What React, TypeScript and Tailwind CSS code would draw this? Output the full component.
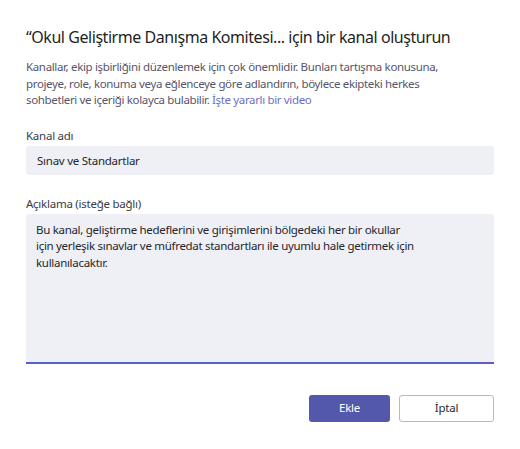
export default function App() {
  return (
    <div
      className="w-[520px] h-[449px] bg-white px-[26px] pt-[25px] text-[#242424]"
      style={{ fontFamily: '"Noto Sans", "Open Sans", sans-serif' }}
    >
      <h1 className="whitespace-nowrap text-[16px] leading-[24px] tracking-[-0.45px] font-normal text-[#1f1f24]">
        “Okul Geliştirme Danışma Komitesi... için bir kanal oluşturun
      </h1>
      <p className="mt-[10px] whitespace-nowrap text-[11.5px] leading-[16.5px] tracking-[-0.35px] text-[#56566a]">
        Kanallar, ekip işbirliğini düzenlemek için çok önemlidir. Bunları tartışma konusuna,
        <br />
        projeye, role, konuma veya eğlenceye göre adlandırın, böylece ekipteki herkes
        <br />
        sohbetleri ve içeriği kolayca bulabilir.{" "}
        <a className="text-[#6b6fc4]">İşte yararlı bir video</a>
      </p>

      <div className="mt-[19px] text-[11.5px] leading-[16.5px] tracking-[-0.25px] text-[#3b3b44]">
        Kanal adı
      </div>
      <div className="mt-[2px] h-[29px] rounded-[3px] bg-[#eef0f5] px-[11px] flex items-center text-[11.5px] tracking-[-0.25px] text-[#26262c]">
        Sınav ve Standartlar
      </div>

      <div className="mt-[21px] text-[11.5px] leading-[16.5px] tracking-[-0.25px] text-[#3b3b44]">
        Açıklama (isteğe bağlı)
      </div>
      <div className="mt-[1px] h-[150px] rounded-t-[3px] bg-[#eef0f5] border-b-2 border-[#5b5fc7] px-[10px] pt-[8px] whitespace-nowrap text-[11.5px] leading-[16.5px] tracking-[-0.3px] text-[#26262c]">
        Bu kanal, geliştirme hedeflerini ve girişimlerini bölgedeki her bir okullar
        <br />
        için yerleşik sınavlar ve müfredat standartları ile uyumlu hale getirmek için
        <br />
        kullanılacaktır.
      </div>

      <div className="mt-[31px] flex justify-end gap-[9px]">
        <button className="h-[27px] w-[81px] rounded-[3px] bg-[#5458ad] text-white text-[11.5px] tracking-[-0.25px]">
          Ekle
        </button>
        <button className="h-[27px] w-[95px] rounded-[3px] border border-[#b9b9c0] bg-white text-[#2a2a30] text-[11.5px] tracking-[-0.25px]">
          İptal
        </button>
      </div>
    </div>
  );
}
